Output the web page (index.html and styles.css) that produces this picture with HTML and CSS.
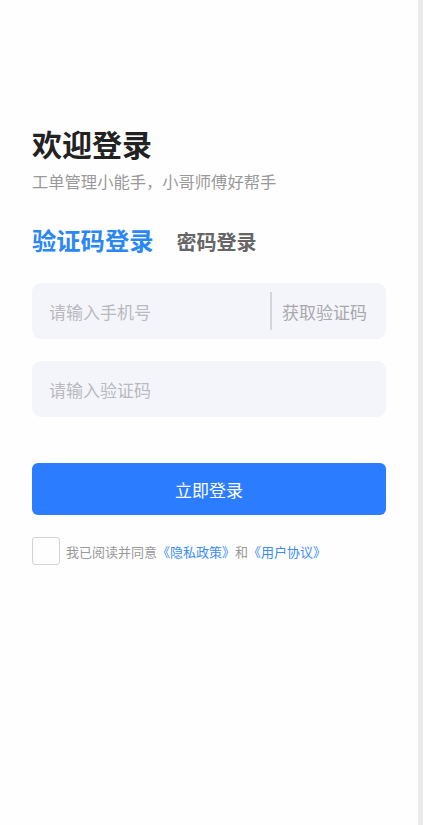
FILE: index.html
```html
<!DOCTYPE html>
<html>
<head>
    <title>登录</title>
    <link rel="stylesheet" href="styles.css">
</head>
<body>
    <div class="page">
        <div class="login">
            <h1 class="title">欢迎登录</h1>
            <p class="subtitle">工单管理小能手，小哥师傅好帮手</p>

            <div class="tabs">
                <span class="tab active">验证码登录</span>
                <span class="tab">密码登录</span>
            </div>

            <div class="field">
                <input type="text" placeholder="请输入手机号">
                <span class="divider"></span>
                <span class="get-code">获取验证码</span>
            </div>
            <div class="field">
                <input type="text" placeholder="请输入验证码">
            </div>

            <button class="submit">立即登录</button>

            <div class="agree">
                <span class="check"></span>
                <span class="agree-text">我已阅读并同意<a href="#">《隐私政策》</a>和<a href="#">《用户协议》</a></span>
            </div>
        </div>
    </div>
    <div class="scrollbar"></div>
</body>
</html>
```

FILE: styles.css
```css
body {
    margin: 0;
    display: flex;
    height: 825px;
    font-family: "Noto Sans CJK SC", "Noto Sans", sans-serif;
    background-color: #fff;
}
.page {
    flex-grow: 1;
    background-color: #fefefe;
}
.scrollbar {
    width: 5px;
    background-color: #ebebeb;
}
.login {
    padding: 122px 32px 0 32px;
}
.title {
    margin: 0;
    font-size: 30px;
    line-height: 42px;
    font-weight: 700;
    color: #222;
}
.subtitle {
    margin: 6px 0 0 0;
    font-size: 16.3px;
    line-height: 22px;
    color: #999;
}
.tabs {
    display: flex;
    align-items: baseline;
    gap: 23px;
    margin-top: 30px;
}
.tab {
    font-size: 20px;
    font-weight: 700;
    color: #666;
}
.tab.active {
    font-size: 24.3px;
    color: #2b86f6;
}
.field {
    display: flex;
    align-items: center;
    height: 56px;
    margin-top: 22px;
    padding: 0 19px 0 17px;
    border-radius: 9px;
    background-color: #f4f5fa;
}
.tabs + .field {
    margin-top: 26px;
}
.field input {
    flex-grow: 1;
    min-width: 0;
    border: none;
    outline: none;
    background: transparent;
    padding: 0;
    font-family: inherit;
    font-size: 17px;
    color: #333;
}
.field input::placeholder {
    color: #b9b9bf;
}
.divider {
    width: 2px;
    height: 38px;
    margin-right: 10px;
    background-color: #d4d5da;
}
.get-code {
    font-size: 17px;
    color: #a8a8ad;
}
.submit {
    display: block;
    width: 100%;
    height: 52px;
    margin-top: 46px;
    border: none;
    border-radius: 6px;
    background-color: #2b7cff;
    color: #fff;
    font-family: inherit;
    font-size: 17px;
}
.agree {
    display: flex;
    align-items: center;
    margin-top: 22px;
}
.check {
    width: 26px;
    height: 26px;
    border: 1px solid #d3d3d3;
    border-radius: 3px;
    margin-right: 6px;
}
.agree-text {
    font-size: 13px;
    color: #999;
}
.agree-text a {
    color: #3b8cf6;
    text-decoration: none;
}
```
